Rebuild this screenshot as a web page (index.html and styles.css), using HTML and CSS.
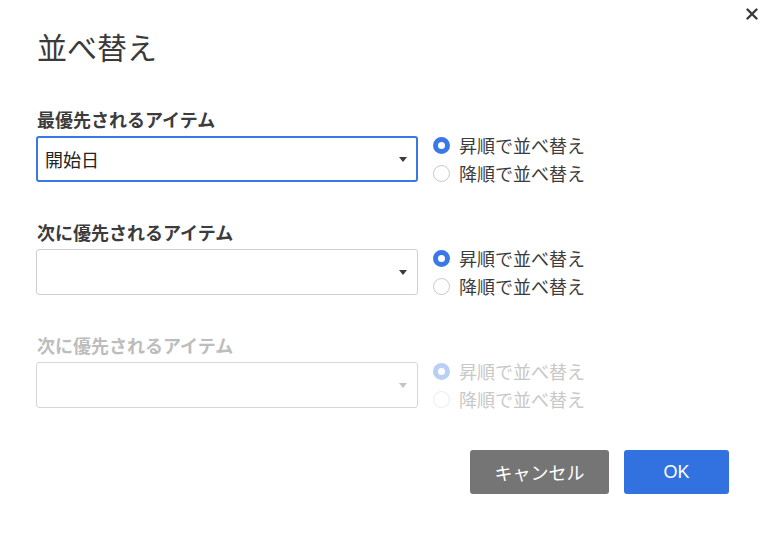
FILE: index.html
```html
<!DOCTYPE html>
<html lang="ja">
<head>
<meta charset="utf-8">
<title>並べ替え</title>
<link rel="stylesheet" href="styles.css">
</head>
<body>
<div class="dialog">
  <button class="close" aria-label="閉じる">
    <svg width="12" height="12" viewBox="0 0 12 12"><path d="M1.5 1.5 L10.5 10.5 M10.5 1.5 L1.5 10.5" stroke="#3a3a3a" stroke-width="2.4" stroke-linecap="round"/></svg>
  </button>
  <h1 class="title">並べ替え</h1>

  <div class="section">
    <div class="label">最優先されるアイテム</div>
    <div class="row">
      <div class="select focused"><span class="value">開始日</span><span class="arrow"></span></div>
      <div class="radios">
        <div class="radio"><span class="dot checked"></span><span class="rtext">昇順で並べ替え</span></div>
        <div class="radio"><span class="dot"></span><span class="rtext">降順で並べ替え</span></div>
      </div>
    </div>
  </div>

  <div class="section">
    <div class="label">次に優先されるアイテム</div>
    <div class="row">
      <div class="select"><span class="value"></span><span class="arrow"></span></div>
      <div class="radios">
        <div class="radio"><span class="dot checked"></span><span class="rtext">昇順で並べ替え</span></div>
        <div class="radio"><span class="dot"></span><span class="rtext">降順で並べ替え</span></div>
      </div>
    </div>
  </div>

  <div class="section disabled">
    <div class="label">次に優先されるアイテム</div>
    <div class="row">
      <div class="select"><span class="value"></span><span class="arrow"></span></div>
      <div class="radios">
        <div class="radio"><span class="dot checked"></span><span class="rtext">昇順で並べ替え</span></div>
        <div class="radio"><span class="dot"></span><span class="rtext">降順で並べ替え</span></div>
      </div>
    </div>
  </div>

  <div class="actions">
    <button class="btn cancel">キャンセル</button>
    <button class="btn ok">OK</button>
  </div>
</div>
</body>
</html>
```
FILE: styles.css
```css
html, body {
  margin: 0;
  padding: 0;
  background: #ffffff;
}
body {
  font-family: "Noto Sans CJK JP", "Noto Sans", sans-serif;
  color: #333333;
}
.dialog {
  position: relative;
  width: 768px;
  height: 533px;
  box-sizing: border-box;
  padding: 28px 39px 0 36px;
}
.close {
  position: absolute;
  top: 8px;
  right: 10px;
  width: 12px;
  height: 12px;
  padding: 0;
  border: 0;
  background: transparent;
  display: flex;
}
.title {
  margin: 0 0 0 1px;
  font-size: 30px;
  line-height: 36px;
  font-weight: 400;
  color: #3a3a3a;
}
.section {
  margin-top: 43px;
}
.section + .section {
  margin-top: 38px;
}
.label {
  font-size: 18px;
  line-height: 24px;
  font-weight: 700;
  color: #3c3c3c;
  margin-left: 1px;
  margin-bottom: 5px;
}
.row {
  display: flex;
  align-items: center;
}
.select {
  width: 382px;
  height: 46px;
  box-sizing: border-box;
  border: 1px solid #cfcfcf;
  border-radius: 3px;
  display: flex;
  align-items: center;
  padding: 0 10px 0 8px;
  background: #fff;
}
.select.focused {
  border: 2px solid #3b78e7;
  padding: 0 9px 0 7px;
}
.value {
  flex: 1;
  font-size: 18px;
  color: #222;
}
.arrow {
  width: 0;
  height: 0;
  border-left: 4px solid transparent;
  border-right: 4px solid transparent;
  border-top: 5px solid #3c3c3c;
}
.radios {
  margin: -5px 0 -5px 15px;
  display: flex;
  flex-direction: column;
}
.radio {
  display: flex;
  align-items: center;
  height: 28px;
}
.dot {
  width: 17px;
  height: 17px;
  box-sizing: border-box;
  border-radius: 50%;
  border: 1px solid #c8c8c8;
  background: #fff;
  margin-right: 9px;
}
.dot.checked {
  border: 5px solid #3b78e7;
}
.rtext {
  font-size: 18px;
  color: #3c3c3c;
}
.disabled .label { color: #bdbdbd; }
.disabled .select { border-color: #d6d6d6; }
.disabled .arrow { border-top-color: #c4c4c4; }
.disabled .dot { border-color: #ececec; }
.disabled .dot.checked { border-color: #b9cff5; }
.disabled .rtext { color: #c8c8c8; }
.actions {
  margin-top: 42px;
  display: flex;
  justify-content: flex-end;
  gap: 15px;
}
.btn {
  height: 44px;
  border: 0;
  border-radius: 3px;
  color: #ffffff;
  font-family: "Noto Sans CJK JP", "Noto Sans", sans-serif;
  font-size: 18px;
  padding: 0;
}
.cancel {
  width: 139px;
  background: #757575;
}
.ok {
  width: 105px;
  background: #3272e0;
  font-family: "Liberation Sans", "Noto Sans", sans-serif;
}
```
